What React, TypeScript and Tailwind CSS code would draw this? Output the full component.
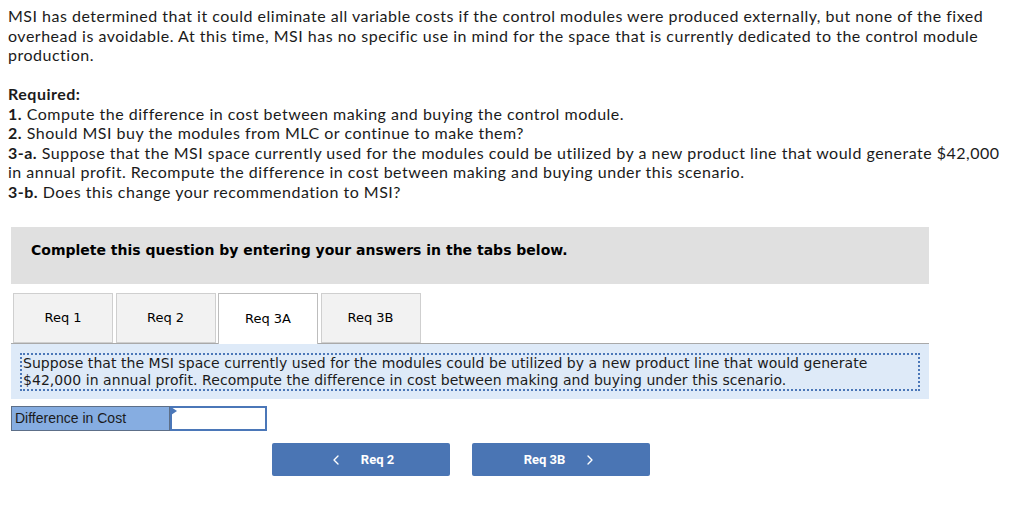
import { ChevronLeft, ChevronRight } from "lucide-react";

const tabs = ["Req 1", "Req 2", "Req 3A", "Req 3B"];
const activeTab = "Req 3A";

export default function App() {
  return (
    <div className="min-h-[514px] bg-white text-[#1b1b1b]">
      <div className="px-2 pt-[6px] font-['Lato',sans-serif] text-[16px] leading-[19.5px] tracking-[0.5px]">
        <p>
          MSI has determined that it could eliminate all variable costs if the control modules were produced externally, but none of the fixed
          <br />
          overhead is avoidable. At this time, MSI has no specific use in mind for the space that is currently dedicated to the control module
          <br />
          production.
        </p>
        <p className="mt-[19.5px]">
          <b>Required:</b>
          <br />
          <b>1.</b> Compute the difference in cost between making and buying the control module.
          <br />
          <b>2.</b> Should MSI buy the modules from MLC or continue to make them?
          <br />
          <b>3-a.</b> Suppose that the MSI space currently used for the modules could be utilized by a new product line that would generate $42,000
          <br />
          in annual profit. Recompute the difference in cost between making and buying under this scenario.
          <br />
          <b>3-b.</b> Does this change your recommendation to MSI?
        </p>
      </div>

      <div className="mx-[11px] mt-[26px] w-[918px] font-['DejaVu_Sans',Verdana,sans-serif]">
        <div className="h-[57px] bg-[#e0e0e0] px-5 pt-[15px] text-[14px] leading-[17px] font-bold text-black">
          Complete this question by entering your answers in the tabs below.
        </div>

        <div className="mt-[9px] flex gap-[2.5px] pl-[2px]">
          {tabs.map((t) => {
            const active = t === activeTab;
            return (
              <div
                key={t}
                className={
                  active
                    ? "relative z-10 -mb-px flex h-[51px] w-[100px] items-center justify-center border border-b-0 border-[#bdbdbd] bg-white text-[13px] text-black"
                    : "flex h-[50px] w-[100px] items-center justify-center border border-[#cfcfcf] bg-[#f2f2f2] text-[13px] text-black"
                }
              >
                {t}
              </div>
            );
          })}
        </div>

        <div className="border-t border-[#a9a9a9] bg-[#deeaf8] px-[9px] pt-[9px] pb-[8px]">
          <div className="border-2 border-dotted border-[#4b77b8] px-px text-[14px] leading-[17px] tracking-[0.05px] text-[#1b1b1b]">
            Suppose that the MSI space currently used for the modules could be utilized by a new product line that would generate
            <br />
            $42,000 in annual profit. Recompute the difference in cost between making and buying under this scenario.
          </div>
        </div>

        <div className="mt-[7px] flex h-[25px]">
          <div className="flex w-[159px] items-center border border-[#5d6f88] bg-[#86ade1] pl-[3px] font-['Liberation_Sans',Arial,sans-serif] text-[14px] text-[#1b1b1b]">
            Difference in Cost
          </div>
          <div className="relative w-[97px] border-2 border-[#4b77b8] bg-white">
            <svg className="absolute -left-px -top-px" width="6" height="9" viewBox="0 0 6 9">
              <polygon points="0,0 6,4 0,8" fill="#4b77b8" />
            </svg>
          </div>
        </div>

        <div className="mt-[12px] flex gap-[22px] pl-[261px] font-['Roboto',sans-serif]">
          <button className="flex h-[33px] w-[178px] items-center justify-center gap-[17px] rounded-[2px] bg-[#4a75b4] text-[13px] font-bold text-white">
            <ChevronLeft size={16} strokeWidth={2} />
            <span>Req 2</span>
          </button>
          <button className="flex h-[33px] w-[178px] items-center justify-center gap-[17px] rounded-[2px] bg-[#4a75b4] text-[13px] font-bold text-white">
            <span>Req 3B</span>
            <ChevronRight size={16} strokeWidth={2} />
          </button>
        </div>
      </div>
    </div>
  );
}
